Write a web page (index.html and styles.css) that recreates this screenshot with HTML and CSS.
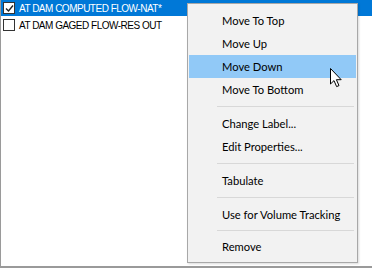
FILE: index.html
```html
<!DOCTYPE html>
<html lang="en">
<head>
    <meta charset="UTF-8">
    <title>Series List</title>
    <link rel="stylesheet" href="styles.css">
</head>
<body>
    <div class="listbox">
        <div class="row selected">
            <span class="check checked">
                <svg width="9" height="9" viewBox="0 0 9 9"><path d="M1 4.5 L3.5 7 L8 1.5" fill="none" stroke="#222" stroke-width="1.4"/></svg>
            </span>
            <span class="label">AT DAM COMPUTED FLOW-NAT*</span>
        </div>
        <div class="row">
            <span class="check"></span>
            <span class="label">AT DAM GAGED FLOW-RES OUT</span>
        </div>

        <div class="menu">
            <div class="item">Move To Top</div>
            <div class="item">Move Up</div>
            <div class="item hover">Move Down</div>
            <div class="item">Move To Bottom</div>
            <div class="sep"></div>
            <div class="item">Change Label...</div>
            <div class="item">Edit Properties...</div>
            <div class="sep"></div>
            <div class="item">Tabulate</div>
            <div class="sep"></div>
            <div class="item">Use for Volume Tracking</div>
            <div class="sep last"></div>
            <div class="item">Remove</div>
        </div>

        <!-- mouse pointer -->
        <svg class="cursor" width="13" height="20" viewBox="0 0 13 20">
            <path d="M0.5 0.5 L0.5 16 L4 12.6 L6.6 18.6 L9 17.6 L6.4 11.7 L11.2 11.7 Z" fill="#fff" stroke="#000" stroke-width="1" stroke-linejoin="round"/>
        </svg>
    </div>
</body>
</html>
```

FILE: styles.css
```css
body {
    margin: 0;
    background: #fff;
    font-family: "Liberation Sans", Arial, sans-serif;
}

.listbox {
    position: relative;
    width: 371px;
    height: 266px;
    border-left: 1px solid #9a9a9a;
    border-bottom: 2px solid #9a9a9a;
    background: #fff;
}

.row {
    display: flex;
    align-items: center;
    height: 16px;
    margin-bottom: 1px;
    padding-left: 2px;
    color: #000;
}

.row.selected {
    background: #0078d7;
    color: #fff;
}

.check {
    display: flex;
    align-items: center;
    justify-content: center;
    width: 10px;
    height: 10px;
    border: 1px solid #333;
    background: #fff;
    margin-right: 4px;
}

.label {
    font-size: 10px;
    letter-spacing: -0.5px;
    white-space: nowrap;
}

/* Context menu */
.menu {
    position: absolute;
    left: 186px;
    top: 3px;
    width: 167px;
    padding: 5px 1px 4px 1px;
    background: #f2f2f2;
    border: 1px solid #a8a8a8;
    box-shadow: 1px 1px 2px rgba(0, 0, 0, 0.15);
    font-family: Lato, "Open Sans", sans-serif;
    font-size: 11.2px;
    color: #000;
}

.item {
    height: 23px;
    line-height: 23px;
    padding-left: 33px;
    white-space: nowrap;
}

.item.hover {
    background: #91c9f7;
}

.sep {
    height: 11px;
    margin-left: 28px;
    margin-right: 2px;
    background: linear-gradient(#d8d8d8, #d8d8d8) no-repeat center / 100% 1px;
}

.sep.last {
    height: 9px;
}

.cursor {
    position: absolute;
    left: 329px;
    top: 68px;
}
```
